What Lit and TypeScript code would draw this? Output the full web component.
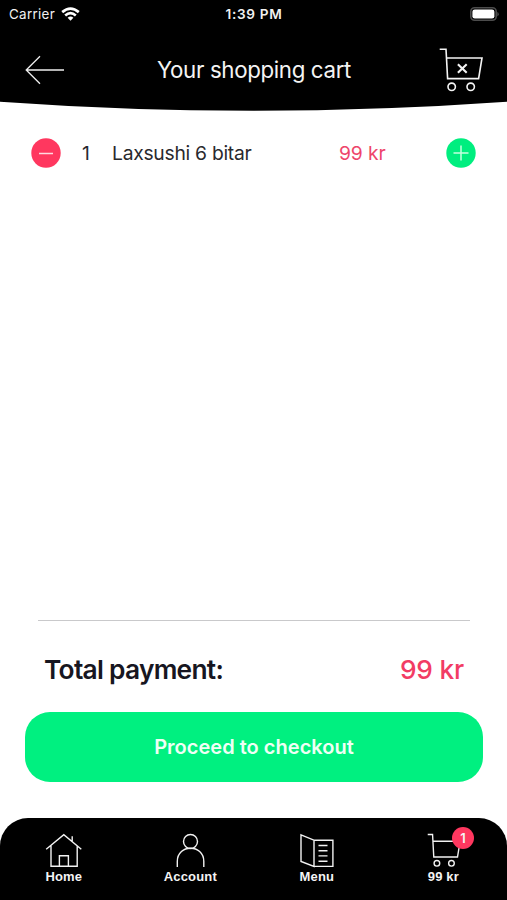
import { LitElement, html, svg, css } from "lit";
import { customElement, state } from "lit/decorators.js";

const cartLines = svg`<path d="M.7 1.2H7l1.6 29.4h31L43 10H7.4" /><circle cx="12.7" cy="38.8" r="3.7" /><circle cx="31.7" cy="38.8" r="3.7" />`;

@customElement("status-bar")
class StatusBar extends LitElement {
  static styles = css`
    :host { display: grid; grid-template-columns: 1fr auto 1fr; align-items: center; height: 27px; padding: 0 8px 0 9px; color: #f1f1f1; font-size: 13.4px; }
    .carrier { display: flex; align-items: center; gap: 6px; }
    .name { letter-spacing: 0.3px; }
    .time { font-weight: 600; letter-spacing: 0.7px; font-size: 13.6px; }
    .battery { justify-self: end; display: block; }
    svg { display: block; }
  `;
  render() {
    return html`
      <div class="carrier">
        <span class="name">Carrier</span>
        <svg width="19" height="14" viewBox="0 0 19 14" fill="none" stroke="#fff" stroke-width="2.7">
          <path d="M1.2 5.1Q9.5-2 17.8 5.1" /><path d="M4.2 8.4Q9.5 3.8 14.8 8.4" />
          <path d="M6.6 10.8Q9.5 8.3 12.4 10.8L9.5 13.8z" fill="#fff" stroke="none" />
        </svg>
      </div>
      <span class="time">1:39 PM</span>
      <svg class="battery" width="29" height="14" viewBox="0 0 29 14">
        <rect x=".8" y=".8" width="25.4" height="12.4" rx="3.8" fill="none" stroke="#4c4c4c" stroke-width="1.6" />
        <rect x="2.4" y="2.4" width="22" height="9.2" rx="2.4" fill="#fff" />
        <path d="M27.3 5a2.4 2.4 0 0 1 0 4.4z" fill="#4c4c4c" />
      </svg>`;
  }
}

@customElement("cart-header")
class CartHeader extends LitElement {
  static styles = css`
    :host { display: block; height: 111px; background: linear-gradient(#000, #000) top / 100% 101px no-repeat; color: #f4f4f4; }
    .bar { display: grid; grid-template-columns: 1fr auto 1fr; align-items: center; height: 74px; padding: 0 24px 0 25px; box-sizing: border-box; }
    h1 { margin: 12px 0 0; font-size: 22.3px; line-height: 28px; font-weight: 400; letter-spacing: -0.35px; }
    svg { display: block; }
    .back { margin-top: 12px; }
    .clear { justify-self: end; margin-top: 12px; }
    .curve { width: 100%; height: 10px; }
  `;
  render() {
    return html`
      <status-bar></status-bar>
      <div class="bar">
        <svg class="back" width="40" height="30" viewBox="0 0 40 30" fill="none" stroke="#eee" stroke-width="1.3"><path d="M15 1.2L1.2 15 15 28.8M1.2 15H39" /></svg>
        <h1>Your shopping cart</h1>
        <svg class="clear" width="44" height="44" viewBox="0 0 44 44" fill="none" stroke="#f4f4f4" stroke-width="1.6">
          ${cartLines}<path d="M18.9 16.2l8.8 8.6M27.7 16.2l-8.8 8.6" stroke-width="2.1" />
        </svg>
      </div>
      <svg class="curve" viewBox="0 0 507 10" preserveAspectRatio="none"><path d="M0 0H507V.8Q253.5 18.8 0 .8z" /></svg>`;
  }
}

@customElement("cart-tabs")
class CartTabs extends LitElement {
  static styles = css`
    :host { display: grid; grid-template-columns: repeat(4, 126.5px); height: 82px; padding: 15px 0 0 0.6px; box-sizing: border-box; background: #000; border-radius: 28px 28px 0 0; color: #f4f4f4; font: 700 13px/15px "Liberation Sans", Arial, sans-serif; }
    .tab { position: relative; display: flex; flex-direction: column; align-items: center; letter-spacing: 0.15px; }
    svg { display: block; }
    .badge { position: absolute; left: 72px; top: -6px; width: 22px; height: 22px; border-radius: 50%; background: #ff375f; font: 600 13px/22px Inter, sans-serif; text-align: center; }
  `;
  icons = [
    svg`<path d="M1.2 16.3L18.8 1.6 36.3 16.3M6 12.8V33.2H32.2V12.8M27.2 8.4V3.2M14.4 33.2V22.7H23.4V33.2" />`,
    svg`<circle cx="18.5" cy="8.5" r="7" /><path d="M5.3 34V28.5C5.3 10.9 31.8 10.9 31.8 28.5V34" />`,
    svg`<path d="M3 1.8L16 7.2V33.4L3 28.4zM16 7.2H34.9V33.4H16M20.5 12.5H29.5M20.5 17.8H29.5M20.5 22.9H29.5M20.5 28.2H29.5" />`,
    svg`<g transform="translate(2.2 .6) scale(.765)" stroke-width="1.8">${cartLines}</g>`,
  ];
  render() {
    return html`${["Home", "Account", "Menu", "99 kr"].map(
      (label, i) => html`<div class="tab">
        <svg width="37" height="36" viewBox="0 0 37 36" fill="none" stroke="#f2f2f2" stroke-width="1.4">${this.icons[i]}</svg>
        <span>${label}</span>${i === 3 ? html`<span class="badge">1</span>` : null}
      </div>`
    )}`;
  }
}

@customElement("app-root")
class AppRoot extends LitElement {
  static styles = css`
    :host { display: flex; flex-direction: column; height: 900px; background: #fff; font-family: Inter, sans-serif; color: #29292d; }
    .items { flex: 1; padding: 27px 31px 0; }
    .item { display: grid; grid-template-columns: 51px 30px 227px 107px 30px; align-items: center; font-size: 19.3px; line-height: 30px; white-space: nowrap; }
    .item span { padding-top: 1px; line-height: 29px; }
    .name { letter-spacing: -0.27px; }
    .price { color: #ee456b; letter-spacing: -0.1px; }
    svg { display: block; }
    .total { display: flex; justify-content: space-between; margin: 0 37px 0 38px; padding: 32px 6px 0; height: 59px; border-top: 1px solid #c9c9cb; font-size: 26.3px; line-height: 34px; font-weight: 600; letter-spacing: -0.72px; color: #171621; }
    .sum { color: #f23c64; font-weight: 550; letter-spacing: -0.2px; }
    button { height: 70px; margin: 0 24px 36px 25px; border: 0; border-radius: 25px; background: #00f080; color: #effff5; font: 600 20px/30px Inter, sans-serif; letter-spacing: 0.02px; }
  `;
  @state() quantity = 1;
  render() {
    return html`
      <cart-header></cart-header>
      <div class="items">
        <div class="item">
          <svg width="30" height="30" viewBox="0 0 30 30"><circle cx="15" cy="15" r="14.7" fill="#ff375f" /><path d="M8 15.5H22" stroke="#ffd9e0" stroke-width="1.5" /></svg>
          <span>${this.quantity}</span>
          <span class="name">Laxsushi 6 bitar</span>
          <span class="price">99 kr</span>
          <svg width="30" height="30" viewBox="0 0 30 30"><circle cx="15" cy="15" r="14.7" fill="#00ee7f" /><path d="M7.5 15H22.5M15 7.5V22.5" stroke="#c4ffdf" stroke-width="1.5" /></svg>
        </div>
      </div>
      <div class="total"><span>Total payment:</span><span class="sum">99 kr</span></div>
      <button>Proceed to checkout</button>
      <cart-tabs></cart-tabs>`;
  }
}
